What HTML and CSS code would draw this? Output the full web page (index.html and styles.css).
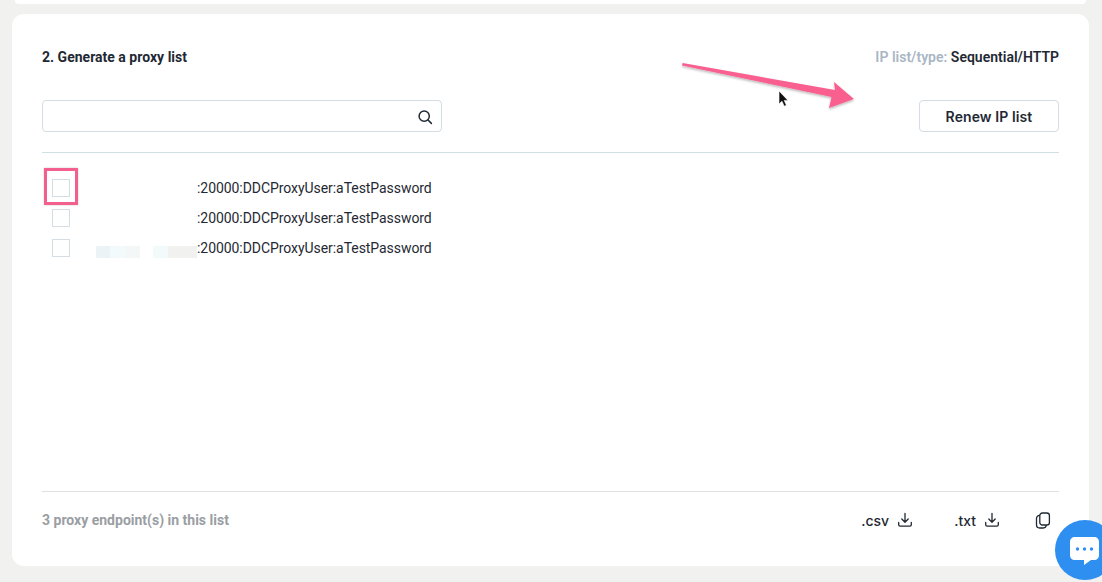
FILE: index.html
```html
<!DOCTYPE html>
<html lang="en">
<head>
<meta charset="utf-8">
<title>Generate a proxy list</title>
<link rel="stylesheet" href="styles.css">
</head>
<body>
<div class="page">
  <div class="top-card"></div>
  <main class="card">
    <header class="head">
      <h2 class="title">2. Generate a proxy list</h2>
      <p class="meta"><span class="meta-label">IP list/type:</span> Sequential/HTTP</p>
    </header>
    <div class="tools">
      <label class="search">
        <input class="search-input" type="text" aria-label="Search">
        <svg class="search-icon" width="16" height="16" viewBox="0 0 16 16" fill="none" stroke="#1f2933" stroke-width="1.5" stroke-linecap="round"><circle cx="7.2" cy="7.2" r="5.1"/><path d="M11 11l3.4 3.4"/></svg>
      </label>
      <button class="renew" type="button">Renew IP list</button>
    </div>
    <ul class="list">
      <li class="row"><span class="check marked"></span><span class="ip"></span><span class="endpoint">:20000:DDCProxyUser:aTestPassword</span></li>
      <li class="row"><span class="check"></span><span class="ip"></span><span class="endpoint">:20000:DDCProxyUser:aTestPassword</span></li>
      <li class="row"><span class="check"></span><span class="ip"><i class="blur b1"></i><i class="blur b2"></i><i class="blur b3"></i><i class="gap"></i><i class="blur b4"></i><i class="blur b5"></i></span><span class="endpoint">:20000:DDCProxyUser:aTestPassword</span></li>
    </ul>
    <footer class="foot">
      <span class="count">3 proxy endpoint(s) in this list</span>
      <div class="actions">
        <span class="action action-csv">.csv
          <svg width="16" height="16" viewBox="0 0 16 16" fill="none" stroke="#1f2933" stroke-width="1.3" stroke-linecap="round" stroke-linejoin="round"><path d="M8 1.5v8.5M4.8 7l3.2 3.2L11.2 7"/><path d="M1.7 10.5v2.2c0 .9.6 1.4 1.4 1.4h9.8c.8 0 1.4-.5 1.4-1.4v-2.2"/></svg>
        </span>
        <span class="action action-txt">.txt
          <svg width="16" height="16" viewBox="0 0 16 16" fill="none" stroke="#1f2933" stroke-width="1.3" stroke-linecap="round" stroke-linejoin="round"><path d="M8 1.5v8.5M4.8 7l3.2 3.2L11.2 7"/><path d="M1.7 10.5v2.2c0 .9.6 1.4 1.4 1.4h9.8c.8 0 1.4-.5 1.4-1.4v-2.2"/></svg>
        </span>
        <svg class="copy" width="16" height="17" viewBox="0 0 16 17" fill="none" stroke="#1f2933" stroke-width="1.3" stroke-linejoin="round"><rect x="4.8" y="1" width="9.6" height="12" rx="2.6"/><path d="M4.8 3.4C2.6 3.6 1.5 4.7 1.5 6.6v6.2c0 2 1.2 3.2 3.2 3.2h3.6c1.7 0 2.8-.9 3.1-3"/></svg>
      </div>
    </footer>
  </main>

  <svg class="arrow" width="190" height="60" viewBox="0 0 190 60">
    <defs><filter id="sh" x="-10%" y="-30%" width="120%" height="170%"><feDropShadow dx="0" dy="1.5" stdDeviation="1.2" flood-color="#000" flood-opacity=".28"/></filter></defs>
    <path filter="url(#sh)" fill="#f9608f" d="M2 3.4 L2.6 1 L155 28 L154 20 L174 37 L149 46 L151.5 35 Z"/>
  </svg>
  <svg class="cursor" width="12" height="18" viewBox="0 0 12 18"><path d="M1 1v13l3-2.8 2.2 5 2.2-1-2.2-4.8H10z" fill="#111" stroke="#fff" stroke-width=".6"/></svg>
  <div class="chat">
    <svg width="29" height="28" viewBox="0 0 29 28"><path fill="#fff" d="M5 0h19c3 0 5 2 5 5v13c0 3-2 5-5 5h-3l-7 5v-5H5c-3 0-5-2-5-5V5c0-3 2-5 5-5z"/><circle cx="7.5" cy="12" r="1.7" fill="#2f8ff0"/><circle cx="14.5" cy="12" r="1.7" fill="#2f8ff0"/><circle cx="21.5" cy="12" r="1.7" fill="#2f8ff0"/></svg>
  </div>
</div>
</body>
</html>
```

FILE: styles.css
```css
* { box-sizing: border-box; }
html, body { margin: 0; padding: 0; }
body {
  width: 1102px;
  height: 582px;
  overflow: hidden;
  background: #f1f1ef;
  font-family: Roboto, "Liberation Sans", sans-serif;
  color: #1f2933;
}
.page {
  position: relative;
  width: 1102px;
  height: 582px;
  overflow: hidden;
}
.top-card {
  height: 4px;
  margin: 0 16px 0 15px;
  background: #fff;
  border-radius: 0 0 8px 8px;
}
.card {
  display: flex;
  flex-direction: column;
  height: 552px;
  margin: 10px 13px 0 12px;
  padding: 0 30px;
  background: #fff;
  border-radius: 12px;
}
.head {
  display: flex;
  justify-content: space-between;
  align-items: center;
  height: 86px;
}
.title, .meta {
  margin: 0;
  font-size: 14px;
  font-weight: 700;
  line-height: 18px;
}
.title { letter-spacing: 0.01px; }
.meta { font-weight: 600; letter-spacing: 0.01px; }
.meta-label { color: #a9b6c4; }
.tools {
  display: flex;
  justify-content: space-between;
  height: 53px;
  border-bottom: 1px solid #cfdfe3;
}
.search {
  position: relative;
  display: block;
  width: 400px;
  height: 32px;
}
.search-input {
  display: block;
  width: 100%;
  height: 100%;
  border: 1px solid #d3dde3;
  border-radius: 4px;
  background: #fff;
  outline: none;
}
.search-icon {
  position: absolute;
  top: 9px;
  right: 9px;
}
.renew {
  width: 140px;
  height: 32px;
  padding: 0;
  border: 1px solid #d3dde3;
  border-radius: 4px;
  background: #fff;
  color: #1f2933;
  font-family: Inter, Roboto, sans-serif;
  font-size: 14px;
  font-weight: 600;
  letter-spacing: 0.1px;
}
.list {
  flex: 1;
  margin: 0;
  padding: 20px 0 0 10px;
  list-style: none;
  border-bottom: 1px solid #e0e0e0;
}
.row {
  display: flex;
  align-items: center;
  height: 30px;
}
.check {
  position: relative;
  flex: none;
  width: 18px;
  height: 18px;
  border: 1px solid #d3dde3;
  background: #fff;
}
.check.marked::after {
  content: "";
  box-sizing: border-box;
  position: absolute;
  left: -9px;
  top: -12px;
  width: 34px;
  height: 37px;
  border: 3px solid #f4608e;
  box-shadow: 0 0 2px rgba(0, 0, 0, .2);
}
.ip {
  display: flex;
  flex: none;
  align-self: flex-end;
  width: 127px;
  height: 12px;
  margin-bottom: 5px;
  padding-left: 26px;
}
.blur { display: block; height: 12px; }
.b1 { width: 14px; background: #ecf3f6; }
.b2 { width: 15px; background: #f3fafb; }
.b3 { width: 15px; background: #f4f7f8; }
.gap { width: 14px; }
.b4 { width: 15px; background: #f2fafc; }
.b5 { width: 29px; background: #f1f1f0; }
.endpoint {
  font-size: 14px;
  line-height: 18px;
  letter-spacing: -0.06px;
  color: #1f2933;
}
.foot {
  display: flex;
  flex: none;
  justify-content: space-between;
  align-items: center;
  height: 56px;
  margin-bottom: 18px;
}
.count {
  color: #9a9ea3;
  font-size: 14px;
  font-weight: 700;
}
.actions {
  display: flex;
  align-items: center;
  padding-right: 8px;
}
.action {
  display: flex;
  align-items: center;
  gap: 8px;
  font-family: Inter, Roboto, sans-serif;
  font-size: 14px;
  font-weight: 500;
}
.action-csv { margin-right: 41px; }
.action-txt { margin-right: 35px; }
.arrow {
  position: absolute;
  left: 680px;
  top: 62px;
}
.cursor {
  position: absolute;
  left: 778px;
  top: 90px;
}
.chat {
  position: absolute;
  left: 1055px;
  top: 520px;
  width: 60px;
  height: 60px;
  padding: 17px 0 0 15px;
  border-radius: 50%;
  background: #2f8ff0;
}
.chat svg { display: block; }
```
